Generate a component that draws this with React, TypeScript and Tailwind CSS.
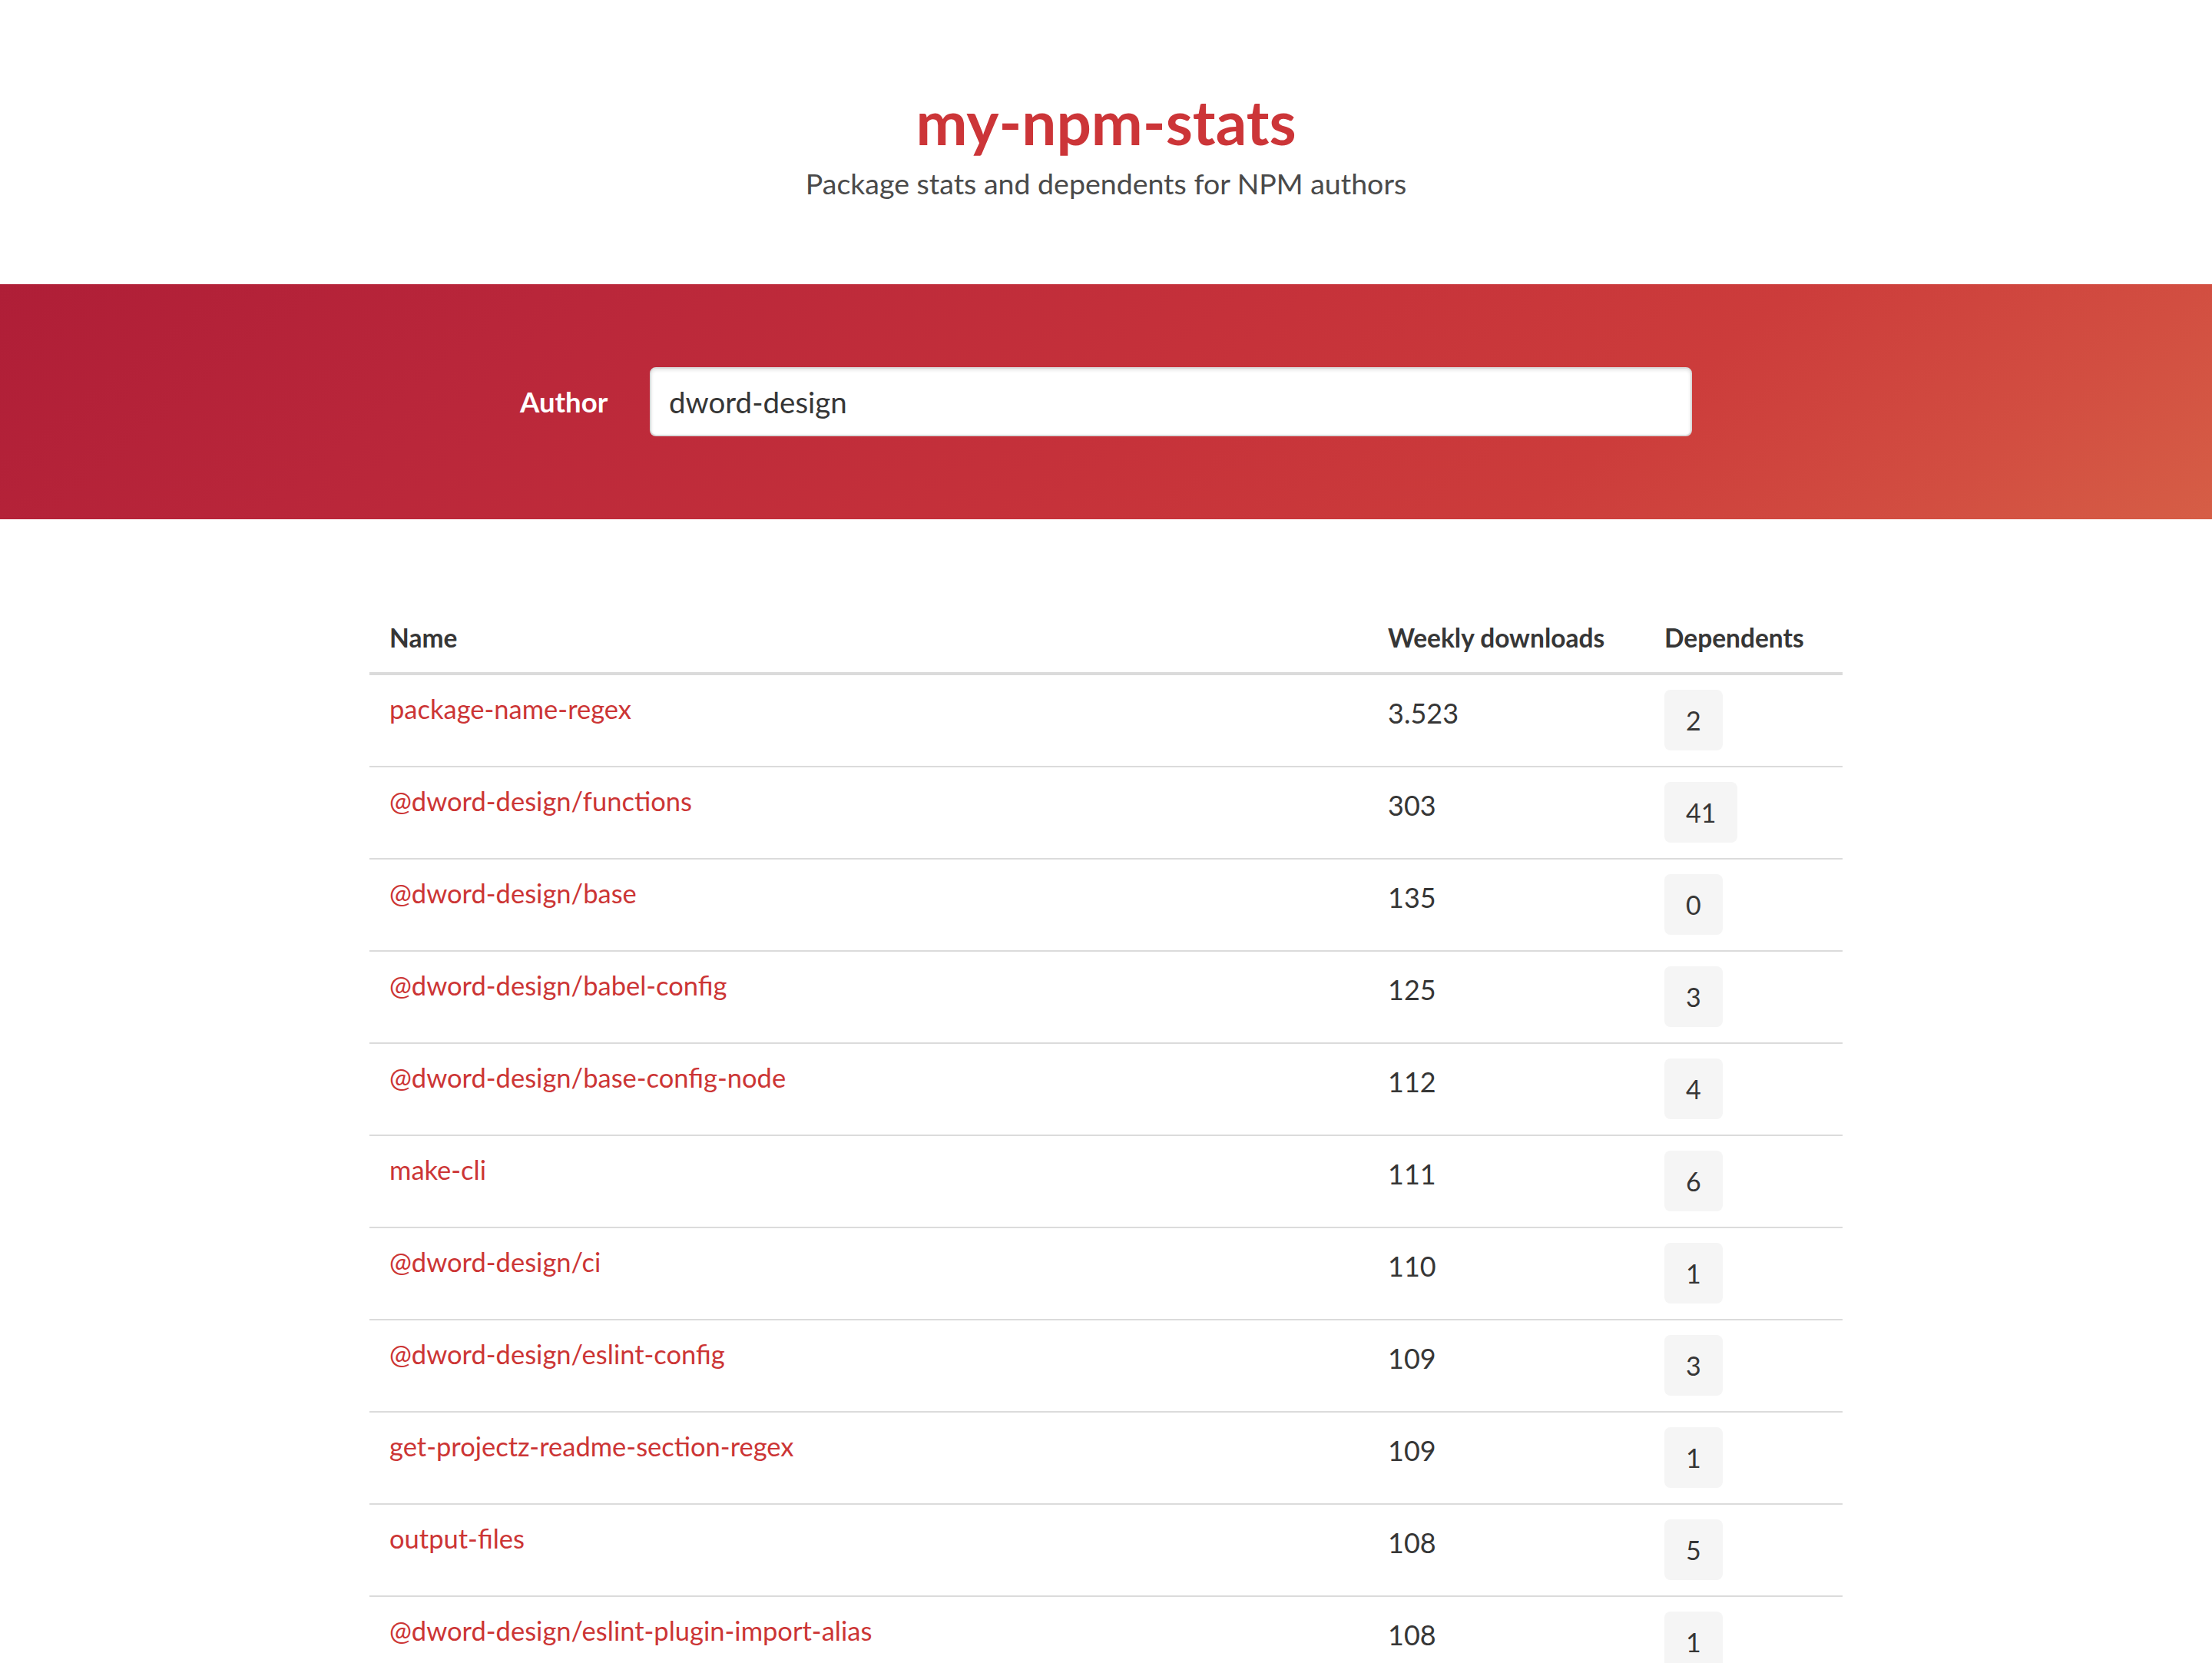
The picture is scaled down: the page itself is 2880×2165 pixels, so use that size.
import React from 'react';

interface PackageRow {
  name: string;
  downloads: string;
  dependents: number;
}

const packages: PackageRow[] = [
  { name: 'package-name-regex', downloads: '3.523', dependents: 2 },
  { name: '@dword-design/functions', downloads: '303', dependents: 41 },
  { name: '@dword-design/base', downloads: '135', dependents: 0 },
  { name: '@dword-design/babel-config', downloads: '125', dependents: 3 },
  { name: '@dword-design/base-config-node', downloads: '112', dependents: 4 },
  { name: 'make-cli', downloads: '111', dependents: 6 },
  { name: '@dword-design/ci', downloads: '110', dependents: 1 },
  { name: '@dword-design/eslint-config', downloads: '109', dependents: 3 },
  { name: 'get-projectz-readme-section-regex', downloads: '109', dependents: 1 },
  { name: 'output-files', downloads: '108', dependents: 5 },
  { name: '@dword-design/eslint-plugin-import-alias', downloads: '108', dependents: 1 },
];

export default function App() {
  return (
    <div className="min-h-screen bg-white font-['Lato',sans-serif] text-[#4a4a4a]">
      {/* en-tête */}
      <header className="h-[370px] flex flex-col items-center pt-[108px]">
        <h1 className="text-[80px] leading-[100px] font-bold text-[#cc3538]">my-npm-stats</h1>
        <p className="text-[37.5px] leading-[50px] mt-[6px] text-[#4a4a4a]">Package stats and dependents for NPM authors</p>
      </header>

      {/* bandeau de recherche */}
      <section className="h-[306px] flex items-center justify-center bg-[linear-gradient(141deg,#af1e37_0%,#b9263a_22%,#c6323a_53%,#cc3c3b_72%,#d24e41_88%,#d65e46_100%)]">
        <div className="w-[1526px] flex items-center">
          <label className="w-[116px] mr-[53px] text-[36.5px] font-bold text-white">Author</label>
          <input
            type="text"
            defaultValue="dword-design"
            className="w-[1357px] h-[90px] px-[23px] rounded-[8px] border-2 border-[#dbdbdb] bg-white text-[38.5px] text-[#363636] shadow-[inset_0_2px_4px_rgba(10,10,10,0.1)] outline-none"
          />
        </div>
      </section>

      {/* tableau des paquets */}
      <section className="pt-[111px] flex justify-center">
        <table className="w-[1918px] border-collapse">
          <thead>
            <tr className="border-b-4 border-[#dbdbdb]">
              <th className="text-left font-bold text-[33.5px] leading-[54px] text-[#363636] pl-[26px] pt-[16px] pb-[18px]">Name</th>
              <th className="w-[360px] text-left font-bold text-[33.5px] leading-[54px] text-[#363636] pl-[26px] pt-[16px] pb-[18px]">Weekly downloads</th>
              <th className="w-[258px] text-left font-bold text-[33.5px] leading-[54px] text-[#363636] pl-[26px] pt-[16px] pb-[18px]">Dependents</th>
            </tr>
          </thead>
          <tbody>
            {packages.map(p => (
              <tr key={p.name} className="border-b-2 border-[#dbdbdb] align-top">
                <td className="pl-[26px] pt-[17px] pb-[19px] text-[34.5px] leading-[54px] text-[#cc3535]">{p.name}</td>
                <td className="pl-[26px] pt-[22px] pb-[19px] text-[36px] leading-[54px] text-[#363636]">{p.downloads}</td>
                <td className="pl-[26px] pt-[19px] pb-[20px]">
                  <span className="inline-flex items-center justify-center h-[79px] px-[28px] rounded-[8px] bg-[#f5f5f5] text-[34px] text-[#363636]">
                    {p.dependents}
                  </span>
                </td>
              </tr>
            ))}
          </tbody>
        </table>
      </section>
    </div>
  );
}
